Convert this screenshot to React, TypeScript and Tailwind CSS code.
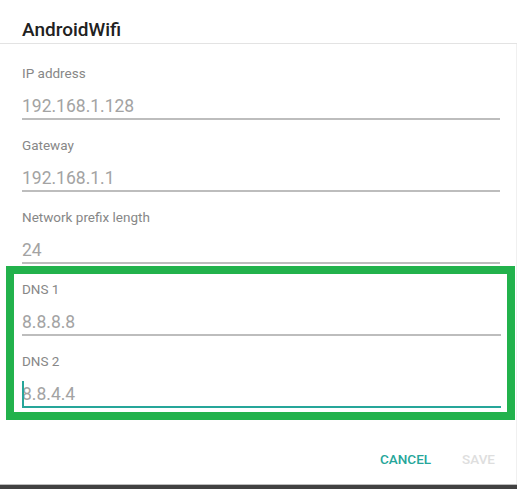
import React from "react";

const font = { fontFamily: "Roboto, 'Noto Sans', Arial, sans-serif" };

function Field({
  label,
  value,
  focused = false,
  padL = "pl-[22px]",
  padR = "pr-[16px]",
}: {
  label: string;
  value: string;
  focused?: boolean;
  padL?: string;
  padR?: string;
}) {
  return (
    <div className={`h-[72px] ${padL} ${padR}`}>
      <div className="text-[13.5px] leading-[16px] text-[#878787]">{label}</div>
      <div className="relative mt-[14px] text-[17.5px] leading-[22px] text-[#a3a3a3]">
        {value}
        {focused && (
          <div className="absolute left-0 top-[-2px] h-[25px] w-[2px] bg-[#26a69a]" />
        )}
      </div>
      <div
        className={
          focused
            ? "mt-[1px] h-[2px] bg-[#26a69a]"
            : "mt-[1px] h-[2px] bg-[#bdbdbd]"
        }
      />
    </div>
  );
}

export default function App() {
  return (
    <div className="h-[489px] w-[517px] overflow-hidden bg-white" style={font}>
      <div className="h-[44px] border-b border-[#e3e3e3] pl-[22px] pt-[18px]">
        <div className="text-[19px] font-medium leading-[24px] text-[#212121]">
          AndroidWifi
        </div>
      </div>
      <div className="border-r border-[#f0f0f0] pt-[21px]">
        <Field label="IP address" value="192.168.1.128" />
        <Field label="Gateway" value="192.168.1.1" />
        <div className="h-[57px]">
          <Field label="Network prefix length" value="24" />
        </div>
        <div className="ml-[6px] mr-[1px] border-[8px] border-[#22b24c] pb-[4px] pt-[7px]">
          <Field label="DNS 1" value="8.8.8.8" padL="pl-[8px]" padR="pr-[6px]" />
          <div className="h-[55px]">
            <Field
              label="DNS 2"
              value="8.8.4.4"
              focused
              padL="pl-[8px]"
              padR="pr-[6px]"
            />
          </div>
        </div>
        <div className="flex h-[64px] justify-end gap-[31px] pr-[21px] pt-[31px] text-[13.5px] font-medium leading-[16px]">
          <span className="text-[#26a69a]">CANCEL</span>
          <span className="text-[#dedede]">SAVE</span>
        </div>
      </div>
      <div className="h-[1px] bg-[#bdbdbd]" />
      <div className="h-[4px] bg-[#424242]" />
    </div>
  );
}
